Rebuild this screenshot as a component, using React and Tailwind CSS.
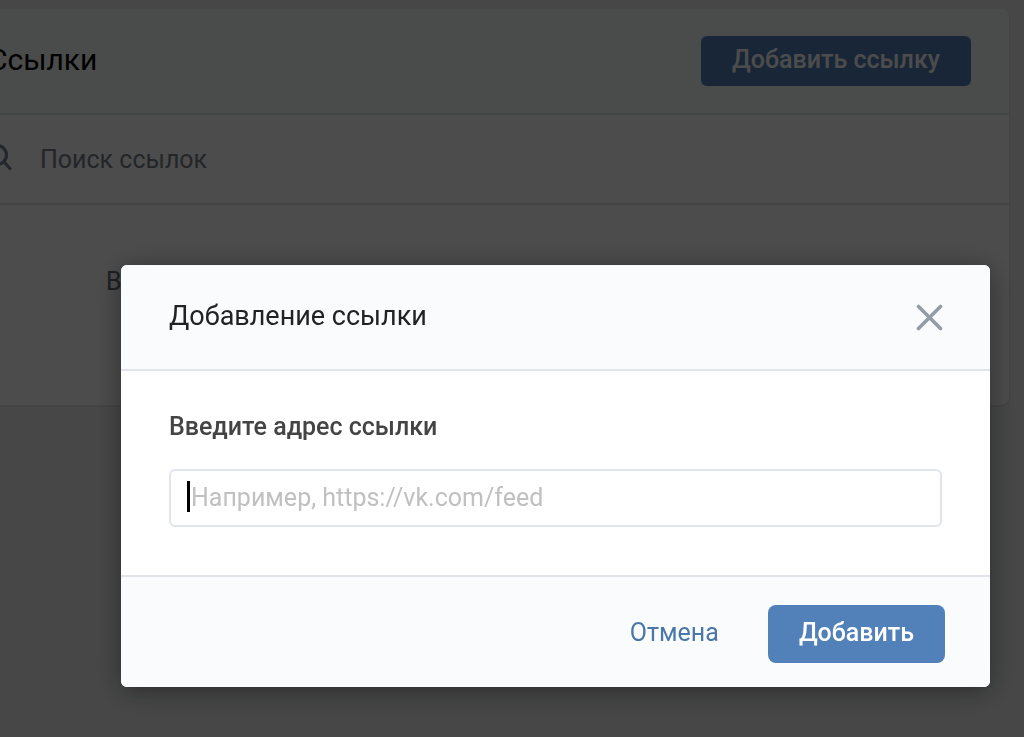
import { useState } from 'react';

export default function App() {
  const [query, setQuery] = useState('');

  return (
    <div className="min-h-screen overflow-hidden bg-[#edeef0] pt-[9px] pr-[15px] font-['Roboto',sans-serif]">
      <main className="-ml-12 rounded-lg bg-white shadow-[0_1px_0_1px_#e3e4e8]">
        <header className="flex h-[106px] items-center justify-between rounded-t-lg border-b-2 border-[#e0e9e8] bg-[#f8fdfa] pr-[38px] pl-9">
          <h1 className="pb-0.5 text-[30px] leading-8 text-black">Ссылки</h1>
          <button type="button" className="h-[50px] rounded-md bg-[#5181b8] px-[31px] pb-0.5 text-[25px] leading-8 font-medium text-white">
            Добавить ссылку
          </button>
        </header>

        <label className="flex h-[90px] items-center gap-6 border-b-2 border-[#e0e9e8] pr-10 pl-[34px]">
          <SearchIcon />
          <input
            type="text"
            aria-label="Поиск ссылок"
            placeholder="Поиск ссылок"
            className="min-w-0 flex-1 bg-transparent pt-0.5 text-[25px] leading-8 text-black outline-none placeholder:text-[#777d85]"
            value={query}
            onChange={(e) => setQuery(e.target.value)}
          />
        </label>

        <div className="h-[200px] pt-[61px] pl-[154px] text-[25px] leading-8 text-[#656a72]">В</div>
      </main>

      <div className="fixed inset-0 flex items-start bg-black/70 pt-[265px] pr-[34px] pl-[121px]">
        <AddLinkDialog />
      </div>
    </div>
  );
}

function AddLinkDialog() {
  const [url, setUrl] = useState('');

  return (
    <form
      role="dialog"
      aria-labelledby="dialog-title"
      className="flex-1 overflow-hidden rounded-md bg-white shadow-[0_4px_28px_rgba(0,0,0,0.4)]"
      onSubmit={(e) => e.preventDefault()}
    >
      <header className="flex h-[106px] items-center justify-between border-b-2 border-[#e1e5eb] bg-[#fafbfc] pr-[47px] pl-12">
        <h2 id="dialog-title" className="pb-0.5 text-[27px] leading-8 text-[#222222]">Добавление ссылки</h2>
        <button type="button" aria-label="Закрыть">
          <CloseIcon />
        </button>
      </header>

      <div className="px-12 pt-10 pb-12">
        <label htmlFor="link-url" className="block text-[25px] leading-8 font-medium text-[#444444]">
          Введите адрес ссылки
        </label>
        <div className="relative mt-[26px]">
          <input
            id="link-url"
            type="text"
            placeholder="Например, https://vk.com/feed"
            className="h-[58px] w-full rounded-md border-2 border-[#e1e5eb] bg-white px-5 pb-0.5 text-[25px] leading-8 text-black outline-none placeholder:text-[#c0c0c0]"
            value={url}
            onChange={(e) => setUrl(e.target.value)}
          />
          <span className="absolute top-3 left-[18px] h-[31px] w-[3px] bg-black" />
        </div>
      </div>

      <footer className="flex h-[112px] items-center justify-end gap-[18px] border-t-2 border-[#e1e5eb] bg-[#fafbfc] pt-1 pr-[45px]">
        <button type="button" className="h-[58px] px-[31px] pb-0.5 text-[25px] leading-8 text-[#4a76a8]">
          Отмена
        </button>
        <button type="submit" className="h-[58px] rounded-lg bg-[#5181b8] px-[31px] pb-0.5 text-[25px] leading-8 font-medium text-white">
          Добавить
        </button>
      </footer>
    </form>
  );
}

function SearchIcon() {
  return (
    <svg className="h-[30px] w-[30px] shrink-0" viewBox="0 0 30 30" fill="none" stroke="#788296" strokeWidth="3.2" strokeLinecap="round">
      <circle cx="11" cy="11" r="9.5" />
      <path d="M18 18 24 24.5" />
    </svg>
  );
}

function CloseIcon() {
  return (
    <svg className="h-[27px] w-[27px]" viewBox="0 0 27 27" fill="none" stroke="#939ca7" strokeWidth="3.6" strokeLinecap="round">
      <path d="M2.5 2.5 24.5 24.5M24.5 2.5 2.5 24.5" />
    </svg>
  );
}
